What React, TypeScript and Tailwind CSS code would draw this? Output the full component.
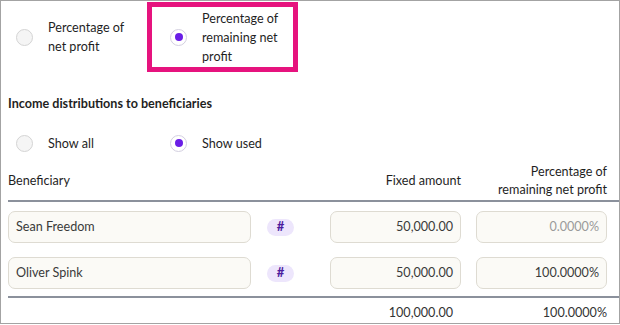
import React from "react";

function Radio({ checked }: { checked?: boolean }) {
  return (
    <span
      className={`flex h-[17px] w-[17px] shrink-0 items-center justify-center rounded-full border-[1.5px] ${
        checked ? "border-[#d3cfe0] bg-white" : "border-[#d4d4d4] bg-[#f5f5f5]"
      }`}
    >
      {checked && <span className="h-[8px] w-[8px] rounded-full bg-[#6a1ee6]" />}
    </span>
  );
}

function Option({ checked, children }: { checked?: boolean; children: React.ReactNode }) {
  return (
    <div className="flex h-full w-[154px] items-center gap-[15px] pl-[15px]">
      <Radio checked={checked} />
      <span className="leading-[19px]">{children}</span>
    </div>
  );
}

function Field({ value, align = "left", muted }: { value: string; align?: "left" | "right"; muted?: boolean }) {
  return (
    <div
      className={`flex h-[32px] items-center rounded-[7px] border border-[#dedbd2] bg-[#fbfaf6] px-[7px] ${
        align === "right" ? "justify-end" : ""
      } ${muted ? "text-[#9a9a9a]" : "text-[#3a3a3a]"}`}
    >
      {value}
    </div>
  );
}

const rows = [
  { name: "Sean Freedom", fixed: "50,000.00", pct: "0.0000%", muted: true },
  { name: "Oliver Spink", fixed: "50,000.00", pct: "100.0000%", muted: false },
];

export default function App() {
  return (
    <div
      className="h-[324px] w-[620px] overflow-hidden border border-[#a3a3a3] bg-white text-[12.6px] text-[#1f1f1f]"
      style={{ fontFamily: "Lato, 'Noto Sans', sans-serif" }}
    >
      {/* Calculation method */}
      <div className="flex h-[72px]">
        <Option>
          Percentage of
          <br />
          net profit
        </Option>
        <div className="relative h-full">
          <Option checked>
            Percentage of
            <br />
            remaining net
            <br />
            profit
          </Option>
          <div className="pointer-events-none absolute left-[-8px] top-[1px] h-[70px] w-[151px] border-[5px] border-[#e6137e]" />
        </div>
      </div>

      <div className="mt-[21px] pl-[7px] font-bold leading-[19px]">Income distributions to beneficiaries</div>

      <div className="mt-[11px] flex h-[38px] items-center">
        <Option>Show all</Option>
        <Option checked>Show used</Option>
      </div>

      {/* Table header */}
      <div className="ml-[7px] flex h-[40px] items-center border-b-2 border-[#8b919c] leading-[18px]">
        <div className="w-[322px]">Beneficiary</div>
        <div className="w-[131px] text-right">Fixed amount</div>
        <div className="ml-[15px] w-[131px] text-right">
          Percentage of
          <br />
          remaining net profit
        </div>
      </div>

      <div className="ml-[7px] flex flex-col gap-[14px] border-b-2 border-[#8b919c] pb-[7px] pt-[9px]">
        {rows.map((r) => (
          <div key={r.name} className="flex items-center">
            <div className="w-[243px]">
              <Field value={r.name} />
            </div>
            <div className="w-[79px] pl-[16px]">
              <span className="flex h-[17px] w-[27px] items-center justify-center rounded-full bg-[#ede6fc] text-[13px] font-bold text-[#4b1d9e]">
                #
              </span>
            </div>
            <div className="w-[131px]">
              <Field value={r.fixed} align="right" />
            </div>
            <div className="ml-[15px] w-[131px]">
              <Field value={r.pct} align="right" muted={r.muted} />
            </div>
          </div>
        ))}
      </div>

      <div className="ml-[7px] flex pt-[5px] leading-[19px] text-[#333]">
        <div className="w-[322px]" />
        <div className="w-[131px] pr-[8px] text-right">100,000.00</div>
        <div className="ml-[15px] w-[131px] text-right">100.0000%</div>
      </div>
    </div>
  );
}
